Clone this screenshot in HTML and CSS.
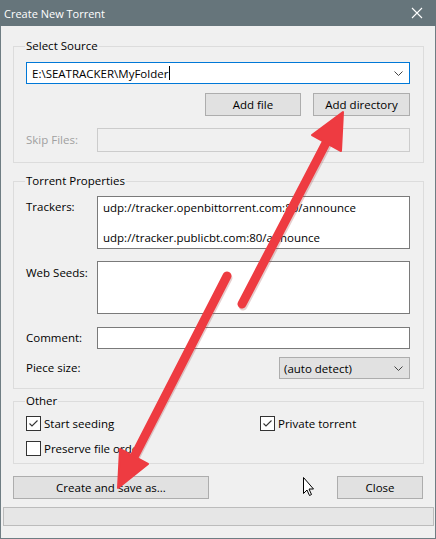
FILE: index.html
```html
<!DOCTYPE html>
<html lang="en">
<head>
    <meta charset="UTF-8">
    <title>Create New Torrent</title>
    <link rel="stylesheet" href="styles.css">
</head>
<body>
    <div class="window">
        <div class="titlebar">
            <span class="title">Create New Torrent</span>
            <svg class="close" width="12" height="12" viewBox="0 0 12 12"><path d="M1 1L11 11M11 1L1 11" stroke="#fff" stroke-width="1.1"/></svg>
        </div>
        <div class="content">
            <fieldset class="group source">
                <legend>Select Source</legend>
                <div class="combo">
                    <span class="combo-text">E:\SEATRACKER\MyFolder<span class="caret"></span></span>
                    <svg class="chev" width="9" height="5" viewBox="0 0 9 5"><path d="M0.5 0.5L4.5 4.5L8.5 0.5" fill="none" stroke="#444" stroke-width="1"/></svg>
                </div>
                <div class="btn-row">
                    <button class="btn addfile">Add file</button>
                    <button class="btn adddir">Add directory</button>
                </div>
                <div class="row skip">
                    <label class="lbl off">Skip Files:</label>
                    <div class="box off"></div>
                </div>
            </fieldset>

            <fieldset class="group props">
                <legend>Torrent Properties</legend>
                <div class="row">
                    <label class="lbl">Trackers:</label>
                    <div class="box area">udp://tracker.openbittorrent.com:80/announce<br><br>udp://tracker.publicbt.com:80/announce</div>
                </div>
                <div class="row seeds">
                    <label class="lbl">Web Seeds:</label>
                    <div class="box area"></div>
                </div>
                <div class="row comment">
                    <label class="lbl">Comment:</label>
                    <div class="box line"></div>
                </div>
                <div class="row piece">
                    <label class="lbl">Piece size:</label>
                    <div class="select">
                        <span>(auto detect)</span>
                        <svg class="chev" width="9" height="5" viewBox="0 0 9 5"><path d="M0.5 0.5L4.5 4.5L8.5 0.5" fill="none" stroke="#444" stroke-width="1"/></svg>
                    </div>
                </div>
            </fieldset>

            <fieldset class="group other">
                <legend>Other</legend>
                <div class="checks">
                    <span class="check on">Start seeding</span>
                    <span class="check on">Private torrent</span>
                    <span class="check">Preserve file order</span>
                </div>
            </fieldset>

            <div class="actions">
                <button class="btn create">Create and save as...</button>
                <button class="btn closebtn">Close</button>
            </div>
            <div class="progress"></div>
        </div>

        <svg class="overlay" width="436" height="539" viewBox="0 0 436 539">
            <g stroke="#9a3a3a" stroke-opacity="0.25" stroke-width="9" stroke-linecap="round" fill="none">
                <line x1="243" y1="306" x2="328" y2="143"/>
                <line x1="228" y1="278" x2="135" y2="458"/>
            </g>
            <g fill="#ee3b41" stroke="#ee3b41" stroke-width="9" stroke-linecap="round">
                <line x1="242" y1="304" x2="327" y2="141"/>
                <line x1="227" y1="276" x2="134" y2="457"/>
            </g>
            <g fill="#ee3b41" stroke="#ee3b41" stroke-width="2" stroke-linejoin="round">
                <polygon points="343,112 341,151 312,135"/>
                <polygon points="118,488 120,449 148,464"/>
            </g>
            <path class="cursor" d="M303.5 477.5V493.5L307 490L309.5 495.5L311.5 494.5L309 489H313.5Z" fill="#fff" stroke="#000" stroke-width="1" stroke-linejoin="round"/>
        </svg>
    </div>
</body>
</html>
```

FILE: styles.css
```css
* { box-sizing: border-box; }
body { margin: 0; background: #fff; font-family: "Open Sans", "Noto Sans", sans-serif; font-size: 11.5px; color: #000; }

.window { position: relative; width: 436px; height: 539px; background: #f0f0f0; border: 1px solid #6f7d83; border-top: none; }
.titlebar { height: 26px; margin: 0 -1px; background: #66757b; display: flex; align-items: center; justify-content: space-between; padding: 0 13px 0 4px; }
.title { color: #fff; font-size: 11px; }

.content { display: flex; flex-direction: column; }

.group { margin: 0 11px 0 12px; border: 1px solid #dcdcdc; padding: 0 13px 0 12px; min-width: 0; }
.group legend { padding: 0 1px; margin-left: -1px; line-height: 16px; }
.source { margin-top: 12px; padding-top: 8px; padding-bottom: 10px; }
.props { margin-top: 10px; padding-top: 7px; padding-bottom: 9px; }
.other { margin-top: 4px; padding-top: 7px; padding-bottom: 7px; }

.combo { height: 22px; border: 1px solid #0078d7; background: #fff; display: flex; align-items: center; justify-content: space-between; padding: 0 6px 0 5px; }
.combo-text { display: flex; align-items: center; }
.caret { display: inline-block; width: 1px; height: 14px; background: #000; margin-left: 1px; }

.btn-row { display: flex; justify-content: flex-end; gap: 12px; margin-top: 9px; }
.btn { height: 23px; border: 1px solid #adadad; background: #e1e1e1; font: inherit; color: #000; padding: 0; }
.addfile { width: 96px; }
.adddir { width: 97px; }

.row { display: flex; }
.lbl { width: 71px; flex-shrink: 0; line-height: 16px; padding-top: 3px; }
.lbl.off { color: #a0a0a0; }
.box { flex: 1; height: 22px; border: 1px solid #7a7a7a; background: #fff; }
.box.off { border-color: #cccccc; background: #f0f0f0; height: 24px; }
.skip { margin-top: 12px; }
.skip .lbl { padding-top: 4px; }
.area { height: 53px; padding: 3px 5px; line-height: 15px; }
.seeds { margin-top: 12px; }
.seeds .lbl { padding-top: 4px; }
.comment { margin-top: 13px; }
.piece { margin-top: 8px; justify-content: space-between; }
.select { width: 131px; height: 22px; border: 1px solid #adadad; background: #e1e1e1; display: flex; align-items: center; justify-content: space-between; padding: 0 6px 0 4px; }

.checks { display: grid; grid-template-columns: 234px auto; row-gap: 10px; }
.check { display: flex; align-items: center; line-height: 15px; }
.check::before { content: ""; width: 13px; height: 13px; border: 1px solid #333; background: #fff; margin-right: 3px; flex-shrink: 0; }
.check.on::before { background: #fff url("data:image/svg+xml;utf8,<svg xmlns='http://www.w3.org/2000/svg' width='11' height='11'><path d='M1.5 5.5L4 8L9.5 2.5' fill='none' stroke='%23333' stroke-width='1.1'/></svg>") no-repeat center; }

.actions { display: flex; justify-content: space-between; margin: 12px 12px 0 12px; }
.create { width: 196px; }
.closebtn { width: 86px; }
.progress { margin: 8px 1px 0 2px; height: 19px; border: 1px solid #bcbcbc; background: #e6e6e6; }

.overlay { position: absolute; left: -1px; top: 0; pointer-events: none; }
```
